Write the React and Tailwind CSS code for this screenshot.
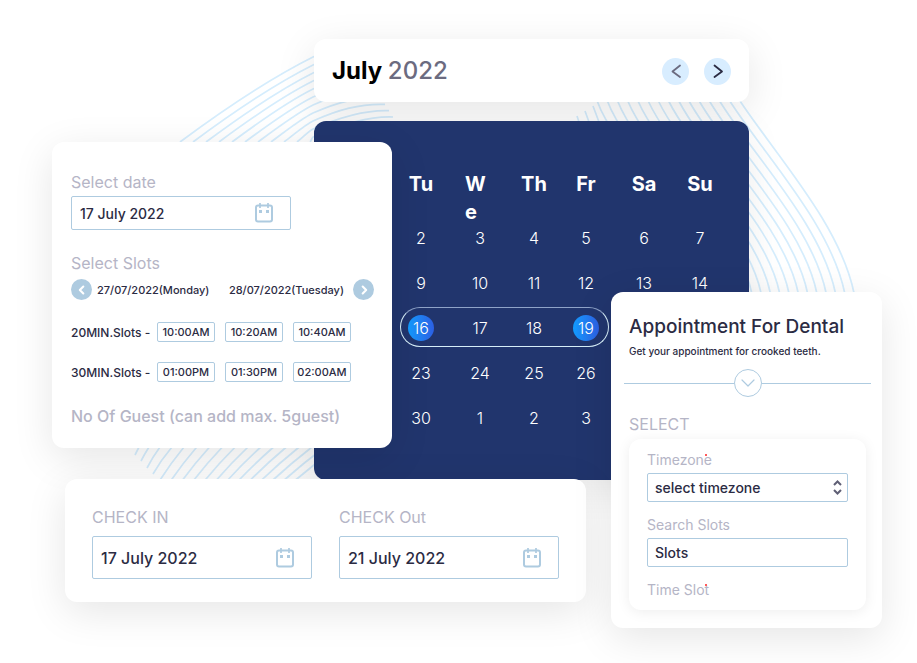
import React from "react";

const range = (n) => Array.from({ length: n }, (_, i) => i);

function upperLeftWave(k) {
  const x = 180 + 13 * k;
  const dx = 313 - x;
  const y = 57 + 8 * k;
  const ex = 353 + 4 * k;
  const ey = 54 + 6.3 * k;
  return `M${x} 142C${x + dx * 0.35} ${142 - dx * 0.26} ${313 - dx * 0.3} ${y + dx * 0.15} 313 ${y}C338 ${y - 11} ${ex - 25} ${ey - 1} ${ex} ${ey}`;
}

function rightWave(m) {
  const tx = 740 - 10.2 * m;
  const bx = 854 - 9.3 * m;
  return `M${tx} 101C${tx + 38 - 1.3 * m} 158 ${bx - 14} 225 ${bx} 293`;
}

const lowerWaves = [
  "M139 447L135 455",
  "M149 447Q144 455 141 461",
  "M160 447Q152 458 147 468",
  "M172 447Q161 460 153 474",
  ...range(13).map((j) => {
    const x = 184 + 12.8 * j;
    const end = x - 24 - 1.5 * j;
    return `M${x} 447Q${(x + end) / 2 - 1} 463 ${end} 480`;
  }),
];

function Waves() {
  return (
    <svg className="absolute left-0 top-0" width="917" height="663" viewBox="0 0 917 663" fill="none" stroke="#d5edfd" strokeWidth="1.7" aria-hidden="true">
      {range(11).map((k) => <path key={k} d={upperLeftWave(k)} />)}
      {range(15).map((m) => <path key={m} d={rightWave(m)} />)}
      <path d="M577 116L579 122M585 111L589 122M593 106L599 122" />
      {lowerWaves.map((d) => <path key={d} d={d} />)}
    </svg>
  );
}

function Chevron({ d, size, width }) {
  return (
    <svg width={size} height={size} viewBox="0 0 16 16" fill="none" stroke="currentColor" strokeWidth={width} strokeLinecap="round" strokeLinejoin="round" aria-hidden="true">
      <path d={d} />
    </svg>
  );
}

const LEFT = "M12 2.500L4.500 8.500l7.500 5.500";
const RIGHT = "M4.500 2.500l7.500 6-7.500 5.500";

function CalendarIcon() {
  return (
    <svg width="20" height="22" viewBox="0 0 20 22" fill="none" stroke="#aecbe0" strokeWidth="2" aria-hidden="true">
      <rect x="2" y="3.500" width="16" height="16" rx="2" />
      <path d="M6 1v5M14 1v5" strokeWidth="1.7" />
      <path d="M5 9.500h3M12 9.500h3" strokeWidth="3" />
    </svg>
  );
}

function DateField({ id, value, boxClass, inputClass }) {
  return (
    <div className={`flex w-[220px] items-center rounded-xs border border-[#aecbe0] pr-4 ${boxClass}`}>
      <input id={id} type="text" defaultValue={value} className={`min-w-0 flex-1 bg-transparent pl-2 font-medium text-[#2b2b43] outline-none ${inputClass}`} />
      <CalendarIcon />
    </div>
  );
}

const days = ["Tu", "We", "Th", "Fr", "Sa", "Su"];
const weeks = [
  [2, 3, 4, 5, 6, 7],
  [9, 10, 11, 12, 13, 14],
  [16, 17, 18, 19],
  [23, 24, 25, 26],
  [30, 1, 2, 3],
];

function Calendar() {
  return (
    <section className="h-[359px] rounded-xl bg-[#21356d] pl-20 pt-[49px] text-white shadow-[0_10px_36px_rgba(0,0,0,0.08)]">
      <table className="table-fixed border-collapse text-center">
        <colgroup>
          <col className="w-[54px]" />
          <col className="w-[64px]" />
          <col className="w-[44px]" />
          <col className="w-[60px]" />
          <col className="w-[56px]" />
          <col className="w-[56px]" />
        </colgroup>
        <thead>
          <tr>
            {days.map((d) => (
              <th key={d} scope="col" className="p-0 align-top text-xl/7 font-bold">
                <div className="h-[45px]">
                  {d === "We" ? <span className="mx-auto block w-[30px] break-all text-left">{d}</span> : d}
                </div>
              </th>
            ))}
          </tr>
        </thead>
        <tbody className="text-base font-light">
          {weeks.map((week, w) => (
            <tr key={w} className="h-[45px]">
              {week.map((n) => (
                <td key={n} className="relative p-0">
                  {n === 16 && <span className="absolute left-1.5 top-0.5 h-10 w-[209px] rounded-full border border-[#d6eef8] border-t-[#8fa3c8]" />}
                  {n === 16 || n === 19 ? (
                    <span className="relative mx-auto flex size-[26px] items-center justify-center rounded-full bg-linear-to-r from-[#0f9bff] to-[#2b5fe3]">{n}</span>
                  ) : n}
                </td>
              ))}
            </tr>
          ))}
        </tbody>
      </table>
    </section>
  );
}

const cardShadow = "shadow-[0_10px_40px_rgba(0,0,0,0.1)]";

const slotRows = [
  { label: "20MIN.Slots -", times: ["10:00AM", "10:20AM", "10:40AM"] },
  { label: "30MIN.Slots -", times: ["01:00PM", "01:30PM", "02:00AM"] },
];

function SlotCard() {
  return (
    <section className={`absolute left-[52px] top-[142px] w-[340px] rounded-xl bg-white px-[19px] pb-5 pt-7 ${cardShadow}`}>
      <label htmlFor="date" className="block text-base/6 text-[#b5b5c6]">Select date</label>
      <div className="mt-0.5">
        <DateField id="date" value="17 July 2022" boxClass="h-[34px]" inputClass="pt-0.5 text-sm" />
      </div>
      <h3 className="mt-[21px] text-base/6 text-[#b5b5c6]">Select Slots</h3>
      <div className="mt-1 flex items-center text-[11px]/4 font-medium text-[#2b2b43]">
        <button type="button" aria-label="Previous day" className="flex size-[21px] items-center justify-center rounded-full bg-[#aecbe0] text-white">
          <Chevron d="M9.500 4L5.500 8l4 4" size={14} width={2.4} />
        </button>
        <span className="ml-[5px]">27/07/2022(Monday)</span>
        <span className="ml-auto">28/07/2022(Tuesday)</span>
        <button type="button" aria-label="Next day" className="ml-[9px] mr-[-1px] flex size-[21px] items-center justify-center rounded-full bg-[#aecbe0] text-white">
          <Chevron d="M6.500 4l4 4-4 4" size={14} width={2.4} />
        </button>
      </div>
      <div className="mt-[22px] flex flex-col gap-5">
        {slotRows.map((row) => (
          <div key={row.label} className="flex h-5 items-center gap-[10px] text-[#2b2b43]">
            <span className="w-[76px] whitespace-nowrap pt-0.5 text-xs font-medium">{row.label}</span>
            {row.times.map((t) => (
              <button key={t} type="button" className="h-5 w-[58px] whitespace-nowrap rounded-xs border border-[#aecbe0] text-[11px]/4 font-medium">{t}</button>
            ))}
          </div>
        ))}
      </div>
      <p className="mt-[22px] text-base/6 font-medium text-[#b5b5c6]">No Of Guest (can add max. 5guest)</p>
    </section>
  );
}

function StayCard() {
  return (
    <section className={`absolute left-[65px] top-[479px] flex gap-[27px] rounded-xl bg-white px-[27px] pb-[23px] pt-[26px] ${cardShadow}`}>
      <div>
        <label htmlFor="in" className="mb-[7px] block text-base/6 text-[#b5b5c6]">CHECK IN</label>
        <DateField id="in" value="17 July 2022" boxClass="h-[43px]" inputClass="text-base" />
      </div>
      <div>
        <label htmlFor="out" className="mb-[7px] block text-base/6 text-[#b5b5c6]">CHECK Out</label>
        <DateField id="out" value="21 July 2022" boxClass="h-[43px]" inputClass="text-base" />
      </div>
    </section>
  );
}

function RequiredDot() {
  return <span className="absolute left-[58px] top-1 size-0.5 bg-[#ff5a5a]" />;
}

function DentalCard() {
  return (
    <section className={`absolute left-[611px] top-[292px] w-[271px] rounded-xl bg-white pb-[18px] pt-[21px] text-[#2b2b43] ${cardShadow}`}>
      <h2 className="px-[18px] text-[19px]/7 font-medium">Appointment For Dental</h2>
      <p className="mt-0.5 px-[18px] text-[10px]/4 font-medium">Get your appointment for crooked teeth.</p>
      <div className="ml-[13px] mr-[11px] mt-[10px] flex items-center text-[#aecbe0]">
        <span className="h-px flex-1 bg-current" />
        <button type="button" aria-label="Expand" className="flex size-7 items-center justify-center rounded-full border border-current">
          <Chevron d="M2 5l6 6 6-6" size={16} width={1.2} />
        </button>
        <span className="h-px flex-1 bg-current" />
      </div>
      <h3 className="mt-[15px] px-[18px] text-base/6 text-[#b5b5c6]">SELECT</h3>
      <div className="ml-[18px] mr-4 mt-[3px] rounded-xl bg-white px-[18px] pb-[10px] pt-[11px] shadow-[0_2px_14px_rgba(0,0,0,0.07)]">
        <label htmlFor="tz" className="relative block text-sm/5 text-[#b5b5c6]">Timezone<RequiredDot /></label>
        <div className="relative mt-[3px]">
          <select id="tz" className="h-[29px] w-full appearance-none rounded-xs border border-[#aecbe0] bg-white pl-[7px] text-sm font-medium">
            <option>select timezone</option>
          </select>
          <svg className="pointer-events-none absolute right-[5px] top-[7px]" width="11" height="15" viewBox="0 0 11 15" fill="none" stroke="#5f5f75" strokeWidth="2" aria-hidden="true">
            <path d="M2 5l3.500-3.500L9 5M2 10l3.500 3.500L9 10" />
          </svg>
        </div>
        <label htmlFor="slots" className="mt-[13px] block text-sm/5 text-[#b5b5c6]">Search Slots</label>
        <input id="slots" type="text" defaultValue="Slots" className="mt-[3px] block h-[29px] w-full rounded-xs border border-[#aecbe0] pl-[7px] text-sm font-medium outline-none" />
        <p className="relative mt-[13px] text-sm/5 text-[#b5b5c6]">Time Slot<RequiredDot /></p>
      </div>
    </section>
  );
}

export default function App() {
  return (
    <main className="min-h-screen overflow-hidden bg-white font-['Inter',sans-serif]">
      <div className="relative mx-auto max-w-[917px] pb-[182px] pl-[314px] pr-[168px] pt-[39px]">
        <Waves />
        <div className="relative flex flex-col gap-[19px]">
          <header className={`flex items-center justify-between rounded-xl bg-white px-[18px] pb-[15px] pt-4 ${cardShadow}`}>
            <h1 className="text-2xl/8 font-bold text-black">
              July <span className="font-medium text-[#6b6b80]">2022</span>
            </h1>
            <div className="flex gap-[15px]">
              <button type="button" aria-label="Previous month" className="flex size-[27px] items-center justify-center rounded-full bg-[#d8edff] text-[#6b6b80]">
                <Chevron d={LEFT} size={16} width={1.8} />
              </button>
              <button type="button" aria-label="Next month" className="flex size-[27px] items-center justify-center rounded-full bg-[#d8edff] text-[#2b2b43]">
                <Chevron d={RIGHT} size={16} width={1.8} />
              </button>
            </div>
          </header>
          <Calendar />
        </div>
        <SlotCard />
        <StayCard />
        <DentalCard />
      </div>
    </main>
  );
}
